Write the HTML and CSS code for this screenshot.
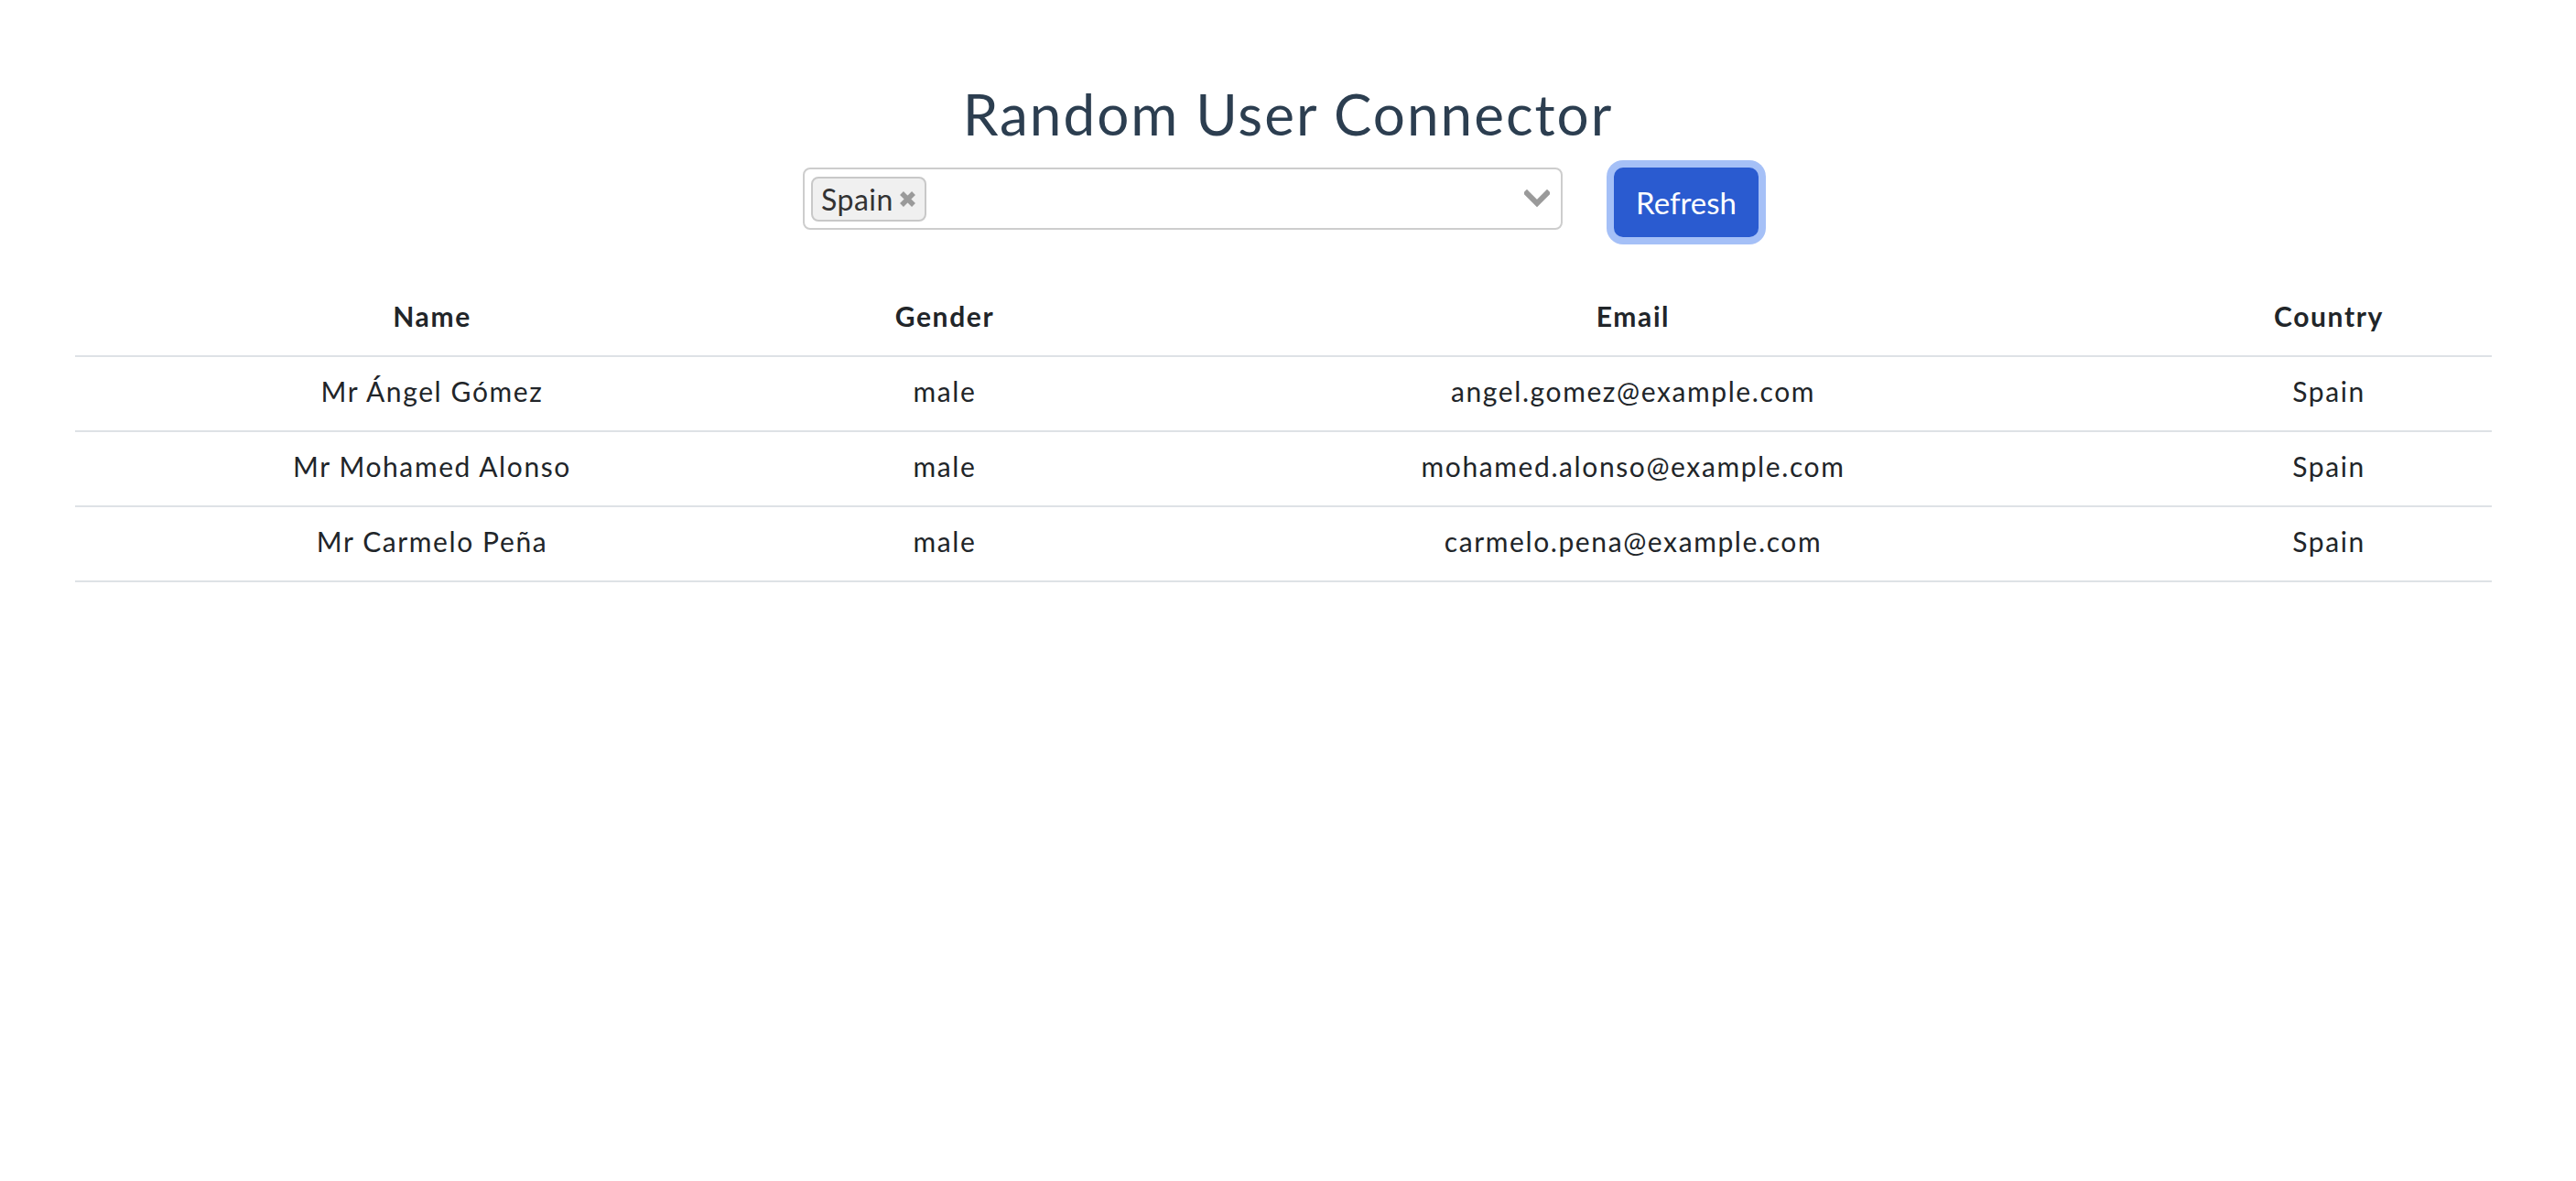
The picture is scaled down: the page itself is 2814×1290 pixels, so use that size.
FILE: index.html
```html
<!DOCTYPE html>
<html lang="en">
<head>
<meta charset="utf-8">
<title>Random User Connector</title>
<link rel="stylesheet" href="styles.css">
</head>
<body>
<div class="app">
  <h1 class="title">Random User Connector</h1>
  <div class="controls">
    <div class="select">
      <div class="tags">
        <span class="tag">Spain<svg class="tag-x" width="21" height="21" viewBox="0 0 21 21"><path d="M4 4 L17 17 M17 4 L4 17" stroke="#9a9a9a" stroke-width="5.5" stroke-linecap="butt"/></svg></span>
      </div>
      <svg class="chevron" width="28" height="20" viewBox="0 0 28 20"><path d="M3 4 L14 15 L25 4" fill="none" stroke="#9a9a9a" stroke-width="6" stroke-linecap="square"/></svg>
    </div>
    <button class="btn">Refresh</button>
  </div>
  <table class="users">
    <colgroup>
      <col class="c-name"><col class="c-gender"><col class="c-email"><col class="c-country">
    </colgroup>
    <thead>
      <tr><th>Name</th><th>Gender</th><th>Email</th><th>Country</th></tr>
    </thead>
    <tbody>
      <tr><td>Mr Ángel Gómez</td><td>male</td><td>angel.gomez@example.com</td><td>Spain</td></tr>
      <tr><td>Mr Mohamed Alonso</td><td>male</td><td>mohamed.alonso@example.com</td><td>Spain</td></tr>
      <tr><td>Mr Carmelo Peña</td><td>male</td><td>carmelo.pena@example.com</td><td>Spain</td></tr>
    </tbody>
  </table>
</div>
</body>
</html>
```
FILE: styles.css
```css
html, body {
  margin: 0;
  padding: 0;
  background: #ffffff;
}
.app {
  font-family: Lato, "Noto Sans", sans-serif;
  color: #2c3e50;
  text-align: center;
  padding-top: 87px;
}
.title {
  margin: 0;
  font-size: 62px;
  line-height: 74px;
  font-weight: 400;
  letter-spacing: 2px;
  color: #2c3e50;
}
.controls {
  display: flex;
  justify-content: center;
  align-items: flex-start;
  gap: 56px;
  margin-top: 22px;
  padding-right: 16px;
}
.select {
  box-sizing: border-box;
  width: 830px;
  height: 68px;
  border: 2px solid #cdcdcd;
  border-radius: 8px;
  display: flex;
  align-items: center;
  justify-content: space-between;
  padding: 0 12px 0 7px;
}
.tags {
  display: flex;
  align-items: center;
}
.tag {
  box-sizing: border-box;
  height: 49px;
  display: inline-flex;
  align-items: center;
  gap: 5px;
  padding: 0 8px 0 9px;
  background: #f0f0f0;
  border: 2px solid #c8c8c8;
  border-radius: 8px;
  color: #333333;
  font-size: 32px;
  letter-spacing: 0.5px;
}
.tag-x {
  display: block;
}
.chevron {
  display: block;
}
.btn {
  box-sizing: border-box;
  width: 158px;
  height: 76px;
  border: none;
  border-radius: 10px;
  background: #2a5bd0;
  color: #ffffff;
  font-family: Lato, "Noto Sans", sans-serif;
  font-size: 33px;
  padding: 0;
  box-shadow: 0 0 0 8px #a5c0f7;
}
.users {
  margin: 49px 92px 0 82px;
  width: 2640px;
  border-collapse: collapse;
  color: #212529;
  font-size: 30px;
  letter-spacing: 1.6px;
}
.c-name { width: 780px; }
.c-gender { width: 340px; }
.c-email { width: 1164px; }
.c-country { width: 356px; }
.users th,
.users td {
  padding: 15px 0 21px;
  line-height: 44px;
  border-bottom: 2px solid #dee2e6;
  text-align: center;
}
.users th {
  font-weight: 700;
}
```
